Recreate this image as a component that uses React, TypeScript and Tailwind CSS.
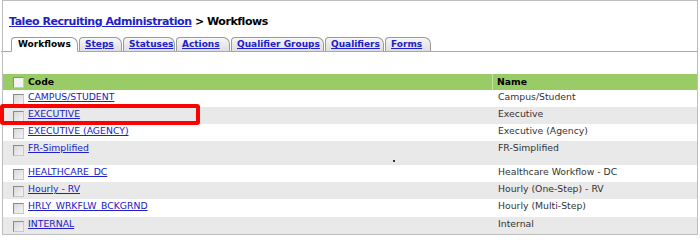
import React from "react";

const tabs = [
  { label: "Workflows", w: 67, active: true },
  { label: "Steps", w: 43 },
  { label: "Statuses", w: 52 },
  { label: "Actions", w: 54 },
  { label: "Qualifier Groups", w: 93 },
  { label: "Qualifiers", w: 59 },
  { label: "Forms", w: 46 },
];

const rows = [
  { code: "CAMPUS/STUDENT", name: "Campus/Student", h: "h-[17px]" },
  { code: "EXECUTIVE", name: "Executive", h: "h-[17px]" },
  { code: "EXECUTIVE (AGENCY)", name: "Executive (Agency)", h: "h-[17px]" },
  { code: "FR-Simplified", name: "FR-Simplified", h: "h-[24px]", dot: true },
  { code: "HEALTHCARE_DC", name: "Healthcare Workflow - DC", h: "h-[17px]" },
  { code: "Hourly - RV", name: "Hourly (One-Step) - RV", h: "h-[17px]" },
  { code: "HRLY_WRKFLW_BCKGRND", name: "Hourly (Multi-Step)", h: "h-[18px]" },
  { code: "INTERNAL", name: "Internal", h: "h-[17px]" },
];

function Box({ header }: { header?: boolean }) {
  return (
    <span
      className={
        "inline-block w-[11px] h-[11px] shrink-0 border border-t-[#8a8a8a] border-l-[#8a8a8a] border-r-[#c8c8c8] border-b-[#c8c8c8] " +
        (header ? "bg-[#f4f4f4]" : "bg-gradient-to-br from-[#d8d8d8] to-[#f4f4f4]")
      }
    />
  );
}

export default function App() {
  return (
    <div
      className="w-[700px] h-[238px] bg-white overflow-hidden relative"
      style={{ fontFamily: '"DejaVu Sans", Verdana, sans-serif' }}
    >
      <div className="ml-[2px] w-[696px] h-[235px] border border-[#bdbdbd] flex flex-col">
        <div className="pl-[6px] pt-[14px] h-[36px] text-[11px] font-bold leading-[14px] text-black tracking-[-0.45px]">
          <span className="text-[#2020c8] underline">Taleo Recruiting Administration</span>
          <span> &gt; Workflows</span>
        </div>
        <div className="flex items-end gap-[1px] border-b border-[#a8a8a8] h-[15px] -ml-[2px] pl-[10px]">
          {tabs.map((t) => (
            <div
              key={t.label}
              style={{ width: t.w }}
              className={
                "h-[14px] text-[9px] font-bold leading-[13px] pl-[5px] border border-[#9a9a9a] rounded-tl-[4px] rounded-tr-[7px] whitespace-nowrap " +
                (t.active
                  ? "bg-white text-black border-b-white -mb-[1px] h-[15px] pl-[6px]"
                  : "bg-gradient-to-b from-[#f6f6f6] to-[#dedede] text-[#2020c8] underline border-b-0")
              }
            >
              {t.label}
            </div>
          ))}
        </div>
        <div className="h-[22px]" />
        <div className="grid grid-cols-[490px_1fr] h-[16px] bg-[#99cc66] text-[9.3px] font-bold leading-[16px] text-black">
          <div className="flex items-center gap-[4px] pl-[10px] border-r border-r-[#c4e6a0]">
            <Box header />
            <span>Code</span>
          </div>
          <div className="pl-[4px]">Name</div>
        </div>
        {rows.map((r, i) => (
          <div
            key={r.code}
            className={
              "grid grid-cols-[490px_1fr] text-[9.3px] leading-[12px] relative " +
              r.h +
              " " +
              (i % 2 === 1 ? "bg-[#e9e9e9]" : "bg-white")
            }
          >
            <div className="flex items-start gap-[4px] pl-[10px] pt-[1px]">
              <span className="mt-[3px] flex">
                <Box />
              </span>
              <span className="text-[#2020c8] underline whitespace-pre">{r.code}</span>
            </div>
            <div className="pl-[5px] pt-[1px] text-[#333]">{r.name}</div>
            {r.dot && (
              <span className="absolute left-[390px] top-[19px] w-[2px] h-[2px] bg-[#333]" />
            )}
          </div>
        ))}
      </div>
      <div className="absolute left-0 top-[104px] w-[200px] h-[21px] border-[4px] border-[#ff0000] rounded-[3px]" />
    </div>
  );
}
